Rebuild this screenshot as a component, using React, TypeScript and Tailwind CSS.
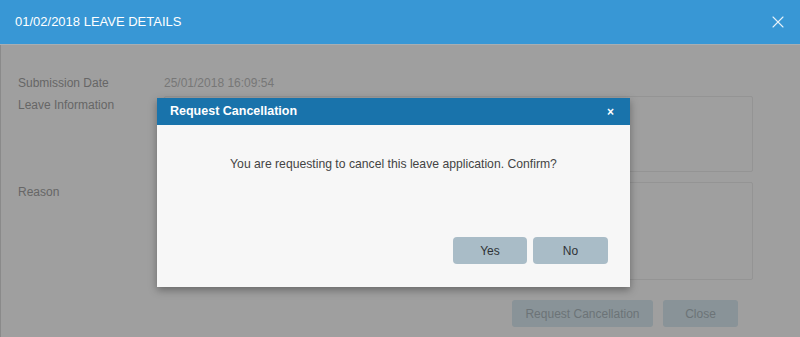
import { X } from "lucide-react"

export default function App() {
  return (
    <div
      className="relative w-[800px] h-[337px] overflow-hidden bg-[#9f9f9f]"
      style={{ fontFamily: '"Liberation Sans", Arial, sans-serif' }}
    >
      {/* leave details dialog (dimmed) */}
      <div className="flex h-[45px] items-center justify-between border-b border-[#a7aeb3] bg-[#3897d5] pl-[15px] pr-[12px]">
        <h1 className="text-[13px] text-white">01/02/2018 LEAVE DETAILS</h1>
        <X className="h-[20px] w-[20px] text-[#e6f1f9]" strokeWidth={1.3} />
      </div>

      <div className="h-[292px] border-l border-[#8a8a8a] pl-[17px] pr-[47px] pt-[28px]">
        <div className="grid grid-cols-[146px_1fr] text-[12px]">
          <div className="flex h-[20px] items-center text-[#666]">Submission Date</div>
          <div className="flex h-[20px] items-center text-[#777]">25/01/2018 16:09:54</div>

          <div className="pt-[3px] text-[#666]">Leave Information</div>
          <div className="mt-[3px] h-[76px] rounded-[2px] border border-[#949494]" />

          <div className="pt-[11px] text-[#666]">Reason</div>
          <div className="mt-[10px] h-[98px] rounded-[2px] border border-[#949494]" />
        </div>

        <div className="mt-[20px] flex justify-end gap-[10px] pr-[15px] text-[12px]">
          <button className="h-[27px] w-[141px] rounded-[3px] bg-[#899398] text-[#6c7377]">
            Request Cancellation
          </button>
          <button className="h-[27px] w-[75px] rounded-[3px] bg-[#899398] text-[#6c7377]">
            Close
          </button>
        </div>
      </div>

      {/* confirmation modal */}
      <div className="absolute left-[157px] top-[98px] flex h-[189px] w-[473px] flex-col bg-[#f7f7f7] shadow-[0_3px_8px_rgba(0,0,0,0.35)]">
        <div className="flex h-[27px] items-center justify-between bg-[#1973ab] pl-[13px] pr-[16px]">
          <span className="text-[12.5px] font-bold text-white">Request Cancellation</span>
          <span className="text-[12px] font-bold leading-none text-white">×</span>
        </div>
        <p className="mt-[30px] text-center text-[12.2px] text-[#444]">
          You are requesting to cancel this leave application. Confirm?
        </p>
        <div className="mt-auto mb-[23px] flex justify-end gap-[6px] pr-[22px] text-[12px]">
          <button className="h-[27px] w-[74px] rounded-[4px] bg-[#a9bcc7] text-[#2f3336]">Yes</button>
          <button className="h-[27px] w-[75px] rounded-[4px] bg-[#a9bcc7] text-[#2f3336]">No</button>
        </div>
      </div>
    </div>
  )
}
